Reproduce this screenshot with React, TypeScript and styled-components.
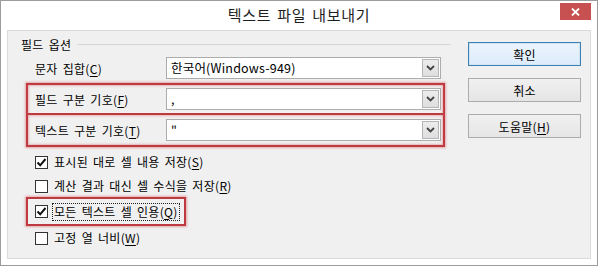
import styled, { createGlobalStyle, css } from 'styled-components';

const GlobalStyle = createGlobalStyle`
    html, body {
        margin: 0;
        padding: 0;
        background: #ffffff;
    }
    body {
        font-family: "Noto Sans CJK KR", "Liberation Sans", sans-serif;
        font-size: 12px;
        color: #000;
        word-spacing: 2px;
        letter-spacing: 0.3px;
    }
`

const Window = styled.div`
    width: 598px;
    height: 266px;
    box-sizing: border-box;
    border: 1px solid #9c9c9c;
    background: #ffffff;
    display: flex;
    flex-direction: column;
`

const TitleBar = styled.div`
    height: 29px;
    display: grid;
    grid-template-columns: 1fr auto 1fr;
    align-items: start;
`

const Title = styled.div`
    font-size: 15px;
    line-height: 18px;
    padding-top: 5px;
    color: #1e1e1e;
    letter-spacing: 0.7px;
    word-spacing: 2px;
`

const CloseButton = styled.div`
    justify-self: end;
    margin: 2px 6px 0 0;
    width: 31px;
    height: 17px;
    background: #c75050;
    color: #fff;
    display: flex;
    align-items: center;
    justify-content: center;
`

const Client = styled.div`
    flex: 1;
    margin: 0 6px 6px 6px;
    border: 1px solid #dadada;
    background: #f0f0f0;
    display: flex;
`

const Group = styled.div`
    width: 443px;
    padding: 5px 0 0 0;
    display: flex;
    flex-direction: column;
`

const Legend = styled.div`
    display: flex;
    align-items: center;
    height: 16px;
    padding-left: 13px;
    color: #000;
`

const LegendLine = styled.div`
    flex: 1;
    height: 1px;
    background: #d5d5d5;
    margin-left: 6px;
`

const Fields = styled.div`
    margin: 1px 0 0 18px;
    width: 419px;
    display: flex;
    flex-direction: column;
`

const Highlight = styled.div`
    border: 2px solid #bf3a40;
    box-shadow: 0 0 2px 1px rgba(220, 110, 115, 0.55), inset 0 0 2px 1px rgba(220, 110, 115, 0.45);
`

const FieldRow = styled.div<{ $divider?: boolean; $boxed?: boolean }>`
    height: 30px;
    box-sizing: border-box;
    display: flex;
    align-items: center;
    padding-left: ${p => (p.$boxed ? 7 : 9)}px;
    ${p => p.$divider && css`
        border-bottom: 2px solid #bf3a40;
        box-shadow: 0 1px 2px rgba(220, 110, 115, 0.45);
    `}
`

const Label = styled.div`
    width: 131px;
`

const Combo = styled.div`
    width: 275px;
    height: 22px;
    box-sizing: border-box;
    border: 1px solid #acacac;
    background: #fff;
    display: flex;
    align-items: center;
    padding: 1px;
`

const ComboText = styled.div`
    flex: 1;
    padding-left: 3px;
    font-size: 12.5px;
    line-height: 18px;
    letter-spacing: 0.2px;
    word-spacing: 0;
`

const DropButton = styled.div`
    width: 17px;
    height: 18px;
    box-sizing: border-box;
    border: 1px solid #b5b5b5;
    background: linear-gradient(#ececec, #dedede);
    display: flex;
    align-items: center;
    justify-content: center;
`

const Checks = styled.div`
    margin: 3px 0 0 18px;
    display: flex;
    flex-direction: column;
    align-items: flex-start;
`

const CheckRow = styled.div<{ $boxed?: boolean }>`
    height: 24px;
    box-sizing: border-box;
    display: flex;
    align-items: center;
    gap: 5px;
    padding: 0 ${p => (p.$boxed ? 5 : 0)}px 0 ${p => (p.$boxed ? 7 : 9)}px;
    ${p => p.$boxed && css`
        height: 29px;
        margin: -1px 0 0 0;
        border: 2px solid #bf3a40;
        box-shadow: 0 0 2px 1px rgba(220, 110, 115, 0.55);
    `}
`

const Box = styled.div`
    width: 13px;
    height: 13px;
    box-sizing: border-box;
    border: 1px solid #333;
    background: #fff;
    display: flex;
    align-items: center;
    justify-content: center;
`

const CheckText = styled.span<{ $focus?: boolean }>`
    line-height: 16px;
    padding: 0 1px;
    ${p => p.$focus && css`
        outline: 1px dotted #222;
    `}
`

const Buttons = styled.div`
    margin-left: 17px;
    padding-top: 11px;
    display: flex;
    flex-direction: column;
    gap: 12px;
`

const Button = styled.div<{ $primary?: boolean }>`
    width: 113px;
    height: 24px;
    box-sizing: border-box;
    border: 1px solid ${p => (p.$primary ? '#3c7fb1' : '#acacac')};
    background: ${p => (p.$primary ? 'linear-gradient(#ecf4fc, #dcecfc)' : 'linear-gradient(#f0f0f0, #e5e5e5)')};
    display: flex;
    align-items: center;
    justify-content: center;
    box-shadow: ${p => (p.$primary ? 'inset 0 0 0 1px #cfe4f7' : 'none')};
`

const Key = styled.span`
    text-decoration: underline;
    text-underline-offset: 2px;
`

function Chevron() {
    return (
        <svg width="9" height="6" viewBox="0 0 9 6">
            <path d="M1 1 L4.5 4.5 L8 1" fill="none" stroke="#444" strokeWidth="1.8" />
        </svg>
    )
}

function Tick() {
    return (
        <svg width="11" height="11" viewBox="0 0 11 11">
            <path d="M1.5 5.5 L4.2 8.3 L9.5 2" fill="none" stroke="#111" strokeWidth="2" />
        </svg>
    )
}

function Select({ value }: { value: string }) {
    return (
        <Combo>
            <ComboText>{value}</ComboText>
            <DropButton><Chevron /></DropButton>
        </Combo>
    )
}

function Check({ checked, children, boxed, focus }: { checked?: boolean; children: React.ReactNode; boxed?: boolean; focus?: boolean }) {
    return (
        <CheckRow $boxed={boxed}>
            <Box>{checked && <Tick />}</Box>
            <CheckText $focus={focus}>{children}</CheckText>
        </CheckRow>
    )
}

export default function App() {
    return (
        <>
            <GlobalStyle />
            <Window>
                <TitleBar>
                    <div />
                    <Title>텍스트 파일 내보내기</Title>
                    <CloseButton>
                        <svg width="9" height="8" viewBox="0 0 9 8">
                            <path d="M1 0.5 L8 7.5 M8 0.5 L1 7.5" stroke="#fff" strokeWidth="1.8" />
                        </svg>
                    </CloseButton>
                </TitleBar>
                <Client>
                    <Group>
                        <Legend>필드 옵션<LegendLine /></Legend>
                        <Fields>
                            <FieldRow>
                                <Label>문자 집합(<Key>C</Key>)</Label>
                                <Select value="한국어(Windows-949)" />
                            </FieldRow>
                            <Highlight>
                                <FieldRow $boxed $divider>
                                    <Label>필드 구분 기호(<Key>F</Key>)</Label>
                                    <Select value="," />
                                </FieldRow>
                                <FieldRow $boxed>
                                    <Label>텍스트 구분 기호(<Key>T</Key>)</Label>
                                    <Select value={'"'} />
                                </FieldRow>
                            </Highlight>
                        </Fields>
                        <Checks>
                            <Check checked>표시된 대로 셀 내용 저장(<Key>S</Key>)</Check>
                            <Check>계산 결과 대신 셀 수식을 저장(<Key>R</Key>)</Check>
                            <Check checked boxed focus>모든 텍스트 셀 인용(<Key>Q</Key>)</Check>
                            <Check>고정 열 너비(<Key>W</Key>)</Check>
                        </Checks>
                    </Group>
                    <Buttons>
                        <Button $primary>확인</Button>
                        <Button>취소</Button>
                        <Button>도움말(<Key>H</Key>)</Button>
                    </Buttons>
                </Client>
            </Window>
        </>
    );
}
